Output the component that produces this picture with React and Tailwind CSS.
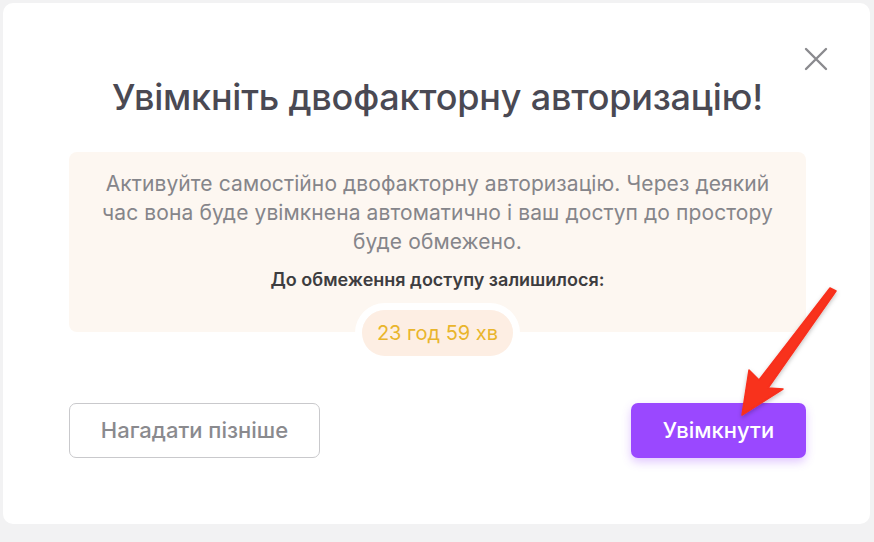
import React from 'react';

const Arrow = () => (
  <svg
    className="absolute left-0 top-0 pointer-events-none"
    width="874"
    height="542"
    viewBox="0 0 874 542"
  >
    <defs>
      <filter id="arrowShadow" x="-20%" y="-20%" width="140%" height="140%">
        <feDropShadow dx="0" dy="2" stdDeviation="2" floodColor="#000" floodOpacity="0.25" />
      </filter>
    </defs>
    <polygon
      points="742,415 749,370 759,380 830,288 836,291 768,388 783,389"
      fill="#f8301c"
      stroke="#f8301c"
      strokeWidth="1.5"
      strokeLinejoin="round"
      filter="url(#arrowShadow)"
    />
  </svg>
);

const CloseIcon = () => (
  <svg width="24" height="24" viewBox="0 0 24 24" fill="none">
    <path d="M2 2L22 22M22 2L2 22" stroke="#8a8a8e" strokeWidth="2.4" strokeLinecap="round" />
  </svg>
);

export default function App() {
  return (
    <div
      className="relative w-[874px] h-[542px] bg-[#f2f2f3] p-[3px] overflow-hidden"
      style={{ fontFamily: 'Inter, "Noto Sans", sans-serif' }}
    >
      <div className="relative w-[867px] h-[521px] bg-white rounded-[10px] pl-[66px] pr-[64px] pt-[74px] flex flex-col">
        <button className="absolute right-[42px] top-[44px]">
          <CloseIcon />
        </button>
        <h1 className="text-center text-[36px] leading-[40px] font-medium text-[#4a4953] tracking-[-0.2px]">
          Увімкніть двофакторну авторизацію!
        </h1>
        <div className="mt-[35px] bg-[#fdf7f1] rounded-[8px] pt-[17px] flex flex-col items-center">
          <p className="text-center text-[21px] leading-[29px] text-[#85858a] whitespace-nowrap tracking-[0.1px]">
            Активуйте самостійно двофакторну авторизацію. Через деякий
            <br />
            час вона буде увімкнена автоматично і ваш доступ до простору
            <br />
            буде обмежено.
          </p>
          <p className="mt-[11px] text-[18px] leading-[26px] font-semibold text-[#3d3d40]">
            До обмеження доступу залишилося:
          </p>
          <div className="mt-[10px] -mb-[31px] rounded-full border-[7px] border-white">
            <div className="w-[151px] h-[46px] rounded-full bg-[#fdeee3] flex items-center justify-center text-[20px] text-[#e9b52c]">
              23 год 59 хв
            </div>
          </div>
        </div>
        <div className="mt-[71px] flex justify-between">
          <button className="w-[251px] h-[55px] rounded-[7px] border border-[#c9c9cc] text-[22px] font-medium text-[#8a8a8e]">
            Нагадати пізніше
          </button>
          <button className="w-[175px] h-[55px] rounded-[7px] bg-[#9a48ff] text-[22px] font-medium text-white shadow-[0_4px_10px_rgba(154,72,255,0.3)]">
            Увімкнути
          </button>
        </div>
      </div>
      <Arrow />
    </div>
  );
}
